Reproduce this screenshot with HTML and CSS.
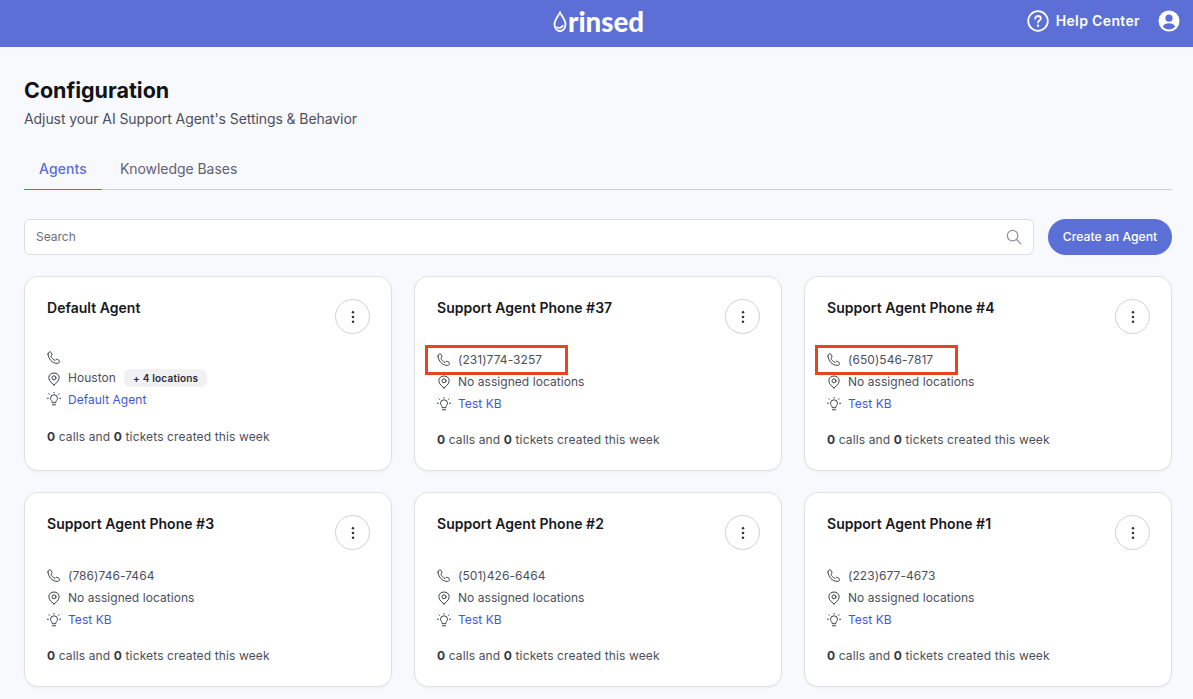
FILE: index.html
```html
<!DOCTYPE html>
<html lang="en">
<head>
<meta charset="utf-8">
<title>Configuration</title>
<link rel="stylesheet" href="styles.css">
</head>
<body>
<svg class="sprite" width="0" height="0" aria-hidden="true">
  <symbol id="i-phone" viewBox="0 0 14 14"><path d="M1 3.100C.9 2 1.700 1 2.700.8c.5-.1.900.1 1.200.5l1 1.700c.3.500.2 1-.2 1.400l-.8.700c.7 1.900 2.200 3.500 4.200 4.300l.8-.8c.4-.4.900-.5 1.400-.2l1.700 1c.4.300.6.700.5 1.200-.2 1.100-1.200 1.900-2.300 1.800C5 12.100 1.400 8 1 3.100z"/></symbol>
  <symbol id="i-pin" viewBox="0 0 14 14"><path d="M7 12.900c-.6-.6-5.200-3.300-5.200-7.200C1.800 2.900 4.100 1 7 1s5.200 1.900 5.200 4.700c0 3.900-4.600 6.600-5.200 7.200z"/><circle cx="7" cy="5.800" r="2"/></symbol>
  <symbol id="i-bulb" viewBox="0 0 14 14"><path d="M5.200 10.300c0-1-.4-1.500-.9-2.100-.5-.5-.8-1.100-.8-1.900a3.500 3.500 0 0 1 7 0c0 .8-.3 1.400-.8 1.900-.5.600-.9 1.100-.9 2.100z"/><path d="M5.500 12.800h3M7 0v1M1.800 1.700l.7.7M12.200 1.700l-.7.7M.2 6.300h1.200M12.600 6.300h1.200"/></symbol>
  <symbol id="i-dots" viewBox="0 0 14 14"><circle cx="7" cy="2.200" r="1.250"/><circle cx="7" cy="7" r="1.250"/><circle cx="7" cy="11.800" r="1.250"/></symbol>
</svg>

<header class="topbar">
  <div class="logo">
    <svg class="logo-drop" viewBox="0 0 14 22" aria-hidden="true"><path d="M7 1.500C5.500 5 1.500 8.600 1.500 13.500a5.500 6.500 0 0 0 11 0C12.500 8.600 8.500 5 7 1.500z"/><path class="logo-shine" d="M4.200 16.200c1.600 1 4.200 1 5.600-1.400"/></svg>
    <span class="logo-text">rinsed</span>
  </div>
  <nav class="topnav">
    <a class="help">
      <svg class="help-icon" viewBox="0 0 22 22" aria-hidden="true"><circle cx="11" cy="11" r="9.800"/><path d="M8.200 8.600c0-1.600 1.300-2.600 2.800-2.600s2.800 1 2.800 2.400c0 2.100-2.800 2.200-2.800 4.200"/><circle class="solid" cx="11" cy="15.800" r="1.200"/></svg>
      <span class="help-text">Help Center</span>
    </a>
    <svg class="user-icon" viewBox="0 0 22 22" aria-hidden="true"><circle class="user-bg" cx="11" cy="11" r="10.500"/><circle class="user-fg" cx="11" cy="8.200" r="3.600"/><path class="user-fg" d="M4.800 16.600c1-2.200 3.400-3.300 6.200-3.300s5.200 1.100 6.200 3.300c-1.500 1.800-3.700 2.900-6.200 2.900s-4.700-1.100-6.200-2.900z"/></svg>
  </nav>
</header>

<main class="page">
  <h1 class="title">Configuration</h1>
  <p class="subtitle">Adjust your AI Support Agent's Settings &amp; Behavior</p>

  <div class="tabs">
    <a class="tab tab-active">Agents</a>
    <a class="tab">Knowledge Bases</a>
  </div>

  <div class="toolbar">
    <label class="search">
      <span class="search-label">Search</span>
      <svg class="search-icon" viewBox="0 0 16 16" aria-hidden="true"><circle cx="6.600" cy="6.600" r="5.300"/><path d="M10.500 10.500l4.800 4.800"/></svg>
    </label>
    <button class="create">Create an Agent</button>
  </div>

  <section class="cards">
    <article class="card card-compact">
      <div class="card-head"><h2 class="card-title">Default Agent</h2><button class="more"><svg class="dots"><use href="#i-dots"/></svg></button></div>
      <ul class="rows">
        <li class="row"><svg class="ico"><use href="#i-phone"/></svg></li>
        <li class="row"><svg class="ico"><use href="#i-pin"/></svg><span class="val">Houston</span><span class="chip">+ 4 locations</span></li>
        <li class="row"><svg class="ico"><use href="#i-bulb"/></svg><a class="link">Default Agent</a></li>
      </ul>
      <p class="stats"><b>0</b> calls and <b>0</b> tickets created this week</p>
    </article>

    <article class="card">
      <div class="card-head"><h2 class="card-title">Support Agent Phone #37</h2><button class="more"><svg class="dots"><use href="#i-dots"/></svg></button></div>
      <ul class="rows">
        <li class="row row-marked"><svg class="ico"><use href="#i-phone"/></svg><span class="val">(231)774-3257</span></li>
        <li class="row"><svg class="ico"><use href="#i-pin"/></svg><span class="val">No assigned locations</span></li>
        <li class="row"><svg class="ico"><use href="#i-bulb"/></svg><a class="val link">Test KB</a></li>
      </ul>
      <p class="stats"><b>0</b> calls and <b>0</b> tickets created this week</p>
    </article>

    <article class="card">
      <div class="card-head"><h2 class="card-title">Support Agent Phone #4</h2><button class="more"><svg class="dots"><use href="#i-dots"/></svg></button></div>
      <ul class="rows">
        <li class="row row-marked"><svg class="ico"><use href="#i-phone"/></svg><span class="val">(650)546-7817</span></li>
        <li class="row"><svg class="ico"><use href="#i-pin"/></svg><span class="val">No assigned locations</span></li>
        <li class="row"><svg class="ico"><use href="#i-bulb"/></svg><a class="val link">Test KB</a></li>
      </ul>
      <p class="stats"><b>0</b> calls and <b>0</b> tickets created this week</p>
    </article>

    <article class="card">
      <div class="card-head"><h2 class="card-title">Support Agent Phone #3</h2><button class="more"><svg class="dots"><use href="#i-dots"/></svg></button></div>
      <ul class="rows">
        <li class="row"><svg class="ico"><use href="#i-phone"/></svg><span class="val">(786)746-7464</span></li>
        <li class="row"><svg class="ico"><use href="#i-pin"/></svg><span class="val">No assigned locations</span></li>
        <li class="row"><svg class="ico"><use href="#i-bulb"/></svg><a class="val link">Test KB</a></li>
      </ul>
      <p class="stats"><b>0</b> calls and <b>0</b> tickets created this week</p>
    </article>

    <article class="card">
      <div class="card-head"><h2 class="card-title">Support Agent Phone #2</h2><button class="more"><svg class="dots"><use href="#i-dots"/></svg></button></div>
      <ul class="rows">
        <li class="row"><svg class="ico"><use href="#i-phone"/></svg><span class="val">(501)426-6464</span></li>
        <li class="row"><svg class="ico"><use href="#i-pin"/></svg><span class="val">No assigned locations</span></li>
        <li class="row"><svg class="ico"><use href="#i-bulb"/></svg><a class="val link">Test KB</a></li>
      </ul>
      <p class="stats"><b>0</b> calls and <b>0</b> tickets created this week</p>
    </article>

    <article class="card">
      <div class="card-head"><h2 class="card-title">Support Agent Phone #1</h2><button class="more"><svg class="dots"><use href="#i-dots"/></svg></button></div>
      <ul class="rows">
        <li class="row"><svg class="ico"><use href="#i-phone"/></svg><span class="val">(223)677-4673</span></li>
        <li class="row"><svg class="ico"><use href="#i-pin"/></svg><span class="val">No assigned locations</span></li>
        <li class="row"><svg class="ico"><use href="#i-bulb"/></svg><a class="val link">Test KB</a></li>
      </ul>
      <p class="stats"><b>0</b> calls and <b>0</b> tickets created this week</p>
    </article>
  </section>
</main>
</body>
</html>
```
FILE: styles.css
```css
*, *::after { box-sizing: border-box; }
html, body { height: 100%; }
body {
  margin: 0;
  height: 699px;
  overflow: hidden;
  background: #f8f9fc;
  color: #4b4f5c;
  font-family: Inter, "Liberation Sans", sans-serif;
  font-size: 12px;
}
.sprite { position: absolute; }

.topbar {
  height: 47px;
  background: #5b6fd6;
  color: #fff;
  display: grid;
  grid-template-columns: 1fr auto 1fr;
  align-items: center;
  padding: 0 13px 5px 0;
}
.logo {
  grid-column: 2;
  display: flex;
  align-items: center;
  gap: 1px;
  margin-left: 17px;
  margin-top: 1px;
}
.logo-drop { width: 14px; height: 22px; fill: none; stroke: #fff; stroke-width: 1.800; stroke-linecap: round; }
.logo-text { font-family: Lato, sans-serif; font-weight: 900; font-size: 27.600px; line-height: 30px; }
.topnav { grid-column: 3; justify-self: end; display: flex; align-items: center; gap: 18px; }
.help { display: flex; align-items: center; gap: 7px; font-size: 14px; font-weight: 600; letter-spacing: .35px; }
.help-text { margin-top: -2px; }
.help-icon { width: 22px; height: 22px; fill: none; stroke: #fff; stroke-width: 1.800; stroke-linecap: round; }
.help-icon .solid { fill: #fff; stroke: none; }
.user-icon { width: 22px; height: 22px; }
.user-bg { fill: #fff; }
.user-fg { fill: #5b6fd6; }

.page { padding: 30px 21px 0 24px; }
.title { margin: 0; font-size: 21.500px; line-height: 26px; font-weight: 700; color: #111318; }
.subtitle { margin: 6px 0 0; font-size: 14px; line-height: 20px; color: #4b4f5c; letter-spacing: -.08px; }

.tabs { margin-top: 23px; display: flex; height: 38px; border-bottom: 1px solid #cfd1da; }
.tab { padding: 7px 15px 0 15px; font-size: 14px; line-height: 20px; color: #5f6273; height: 38px; letter-spacing: -.05px; }
.tab-active { padding-right: 15px; color: #5b6fd6; font-weight: 500; letter-spacing: .1px; border-bottom: 1px solid #5b6fd6; }
.tab + .tab { padding-left: 18px; }

.toolbar { margin-top: 29px; display: flex; gap: 14px; }
.search {
  flex: 1;
  height: 36px;
  display: flex;
  align-items: center;
  justify-content: space-between;
  padding: 0 11px 0 11px;
  background: #fff;
  border: 1px solid #dcdde3;
  border-radius: 6px;
}
.search-label { font-size: 12px; color: #6b6e7b; margin-top: -2px; }
.search-icon { width: 16px; height: 16px; fill: none; stroke: #8c8f9c; stroke-width: 1.200; }
.create {
  width: 124px;
  height: 36px;
  border: 0;
  border-radius: 18px;
  background: #5b6fd6;
  color: #fff;
  font: 500 12.200px Inter, sans-serif;
  padding: 0 0 2px;
}

.cards { margin-top: 21px; display: grid; grid-template-columns: repeat(3, 368px); grid-auto-rows: 195px; column-gap: 22px; row-gap: 21px; }
.card {
  background: #fff;
  border: 1px solid #dfe0e6;
  border-radius: 14px;
  padding: 22px 21px 20px 22px;
  box-shadow: 0 1px 2px rgba(30, 34, 60, .05);
}
.card-head { display: flex; justify-content: space-between; align-items: flex-start; height: 35px; }
.card-title { margin: 0; font-size: 14px; line-height: 18px; font-weight: 600; color: #16181f; letter-spacing: .03px; }
.more {
  width: 35px;
  height: 35px;
  border: 1px solid #cfd1da;
  border-radius: 50%;
  background: #fff;
  padding: 0;
  display: flex;
  align-items: center;
  justify-content: center;
}
.dots { width: 14px; height: 14px; fill: #33363f; }

.rows { list-style: none; margin: 15px 0 0; padding: 0; }
.row { position: relative; height: 22px; display: flex; align-items: center; gap: 7px; font-size: 12px; color: #4b4f5c; letter-spacing: .05px; }
.val { margin-top: -2px; }
.ico { width: 14px; height: 14px; flex: none; fill: none; stroke: #3c3f4a; stroke-width: 1; stroke-linecap: round; stroke-linejoin: round; }
.link { color: #3f56dc; }
.chip {
  margin: -2px 0 0 1px;
  padding: 0 9px;
  height: 18px;
  line-height: 18px;
  background: #f1f1f3;
  border-radius: 6px;
  font-size: 10px;
  font-weight: 600;
  letter-spacing: .2px;
  color: #2a2c33;
}
.row-marked::after {
  content: "";
  position: absolute;
  left: -12px;
  top: -4px;
  width: 143px;
  height: 30px;
  border: 3px solid #e8441f;
}
.stats { margin: 15px 0 0; font-size: 12px; line-height: 20px; color: #4b4f5c; letter-spacing: .13px; }
.stats b { font-weight: 700; color: #33363f; }

.card-compact .rows { margin-top: 14px; }
.card-compact .row { height: 20.500px; }
.card-compact .stats { margin-top: 17px; }
```
